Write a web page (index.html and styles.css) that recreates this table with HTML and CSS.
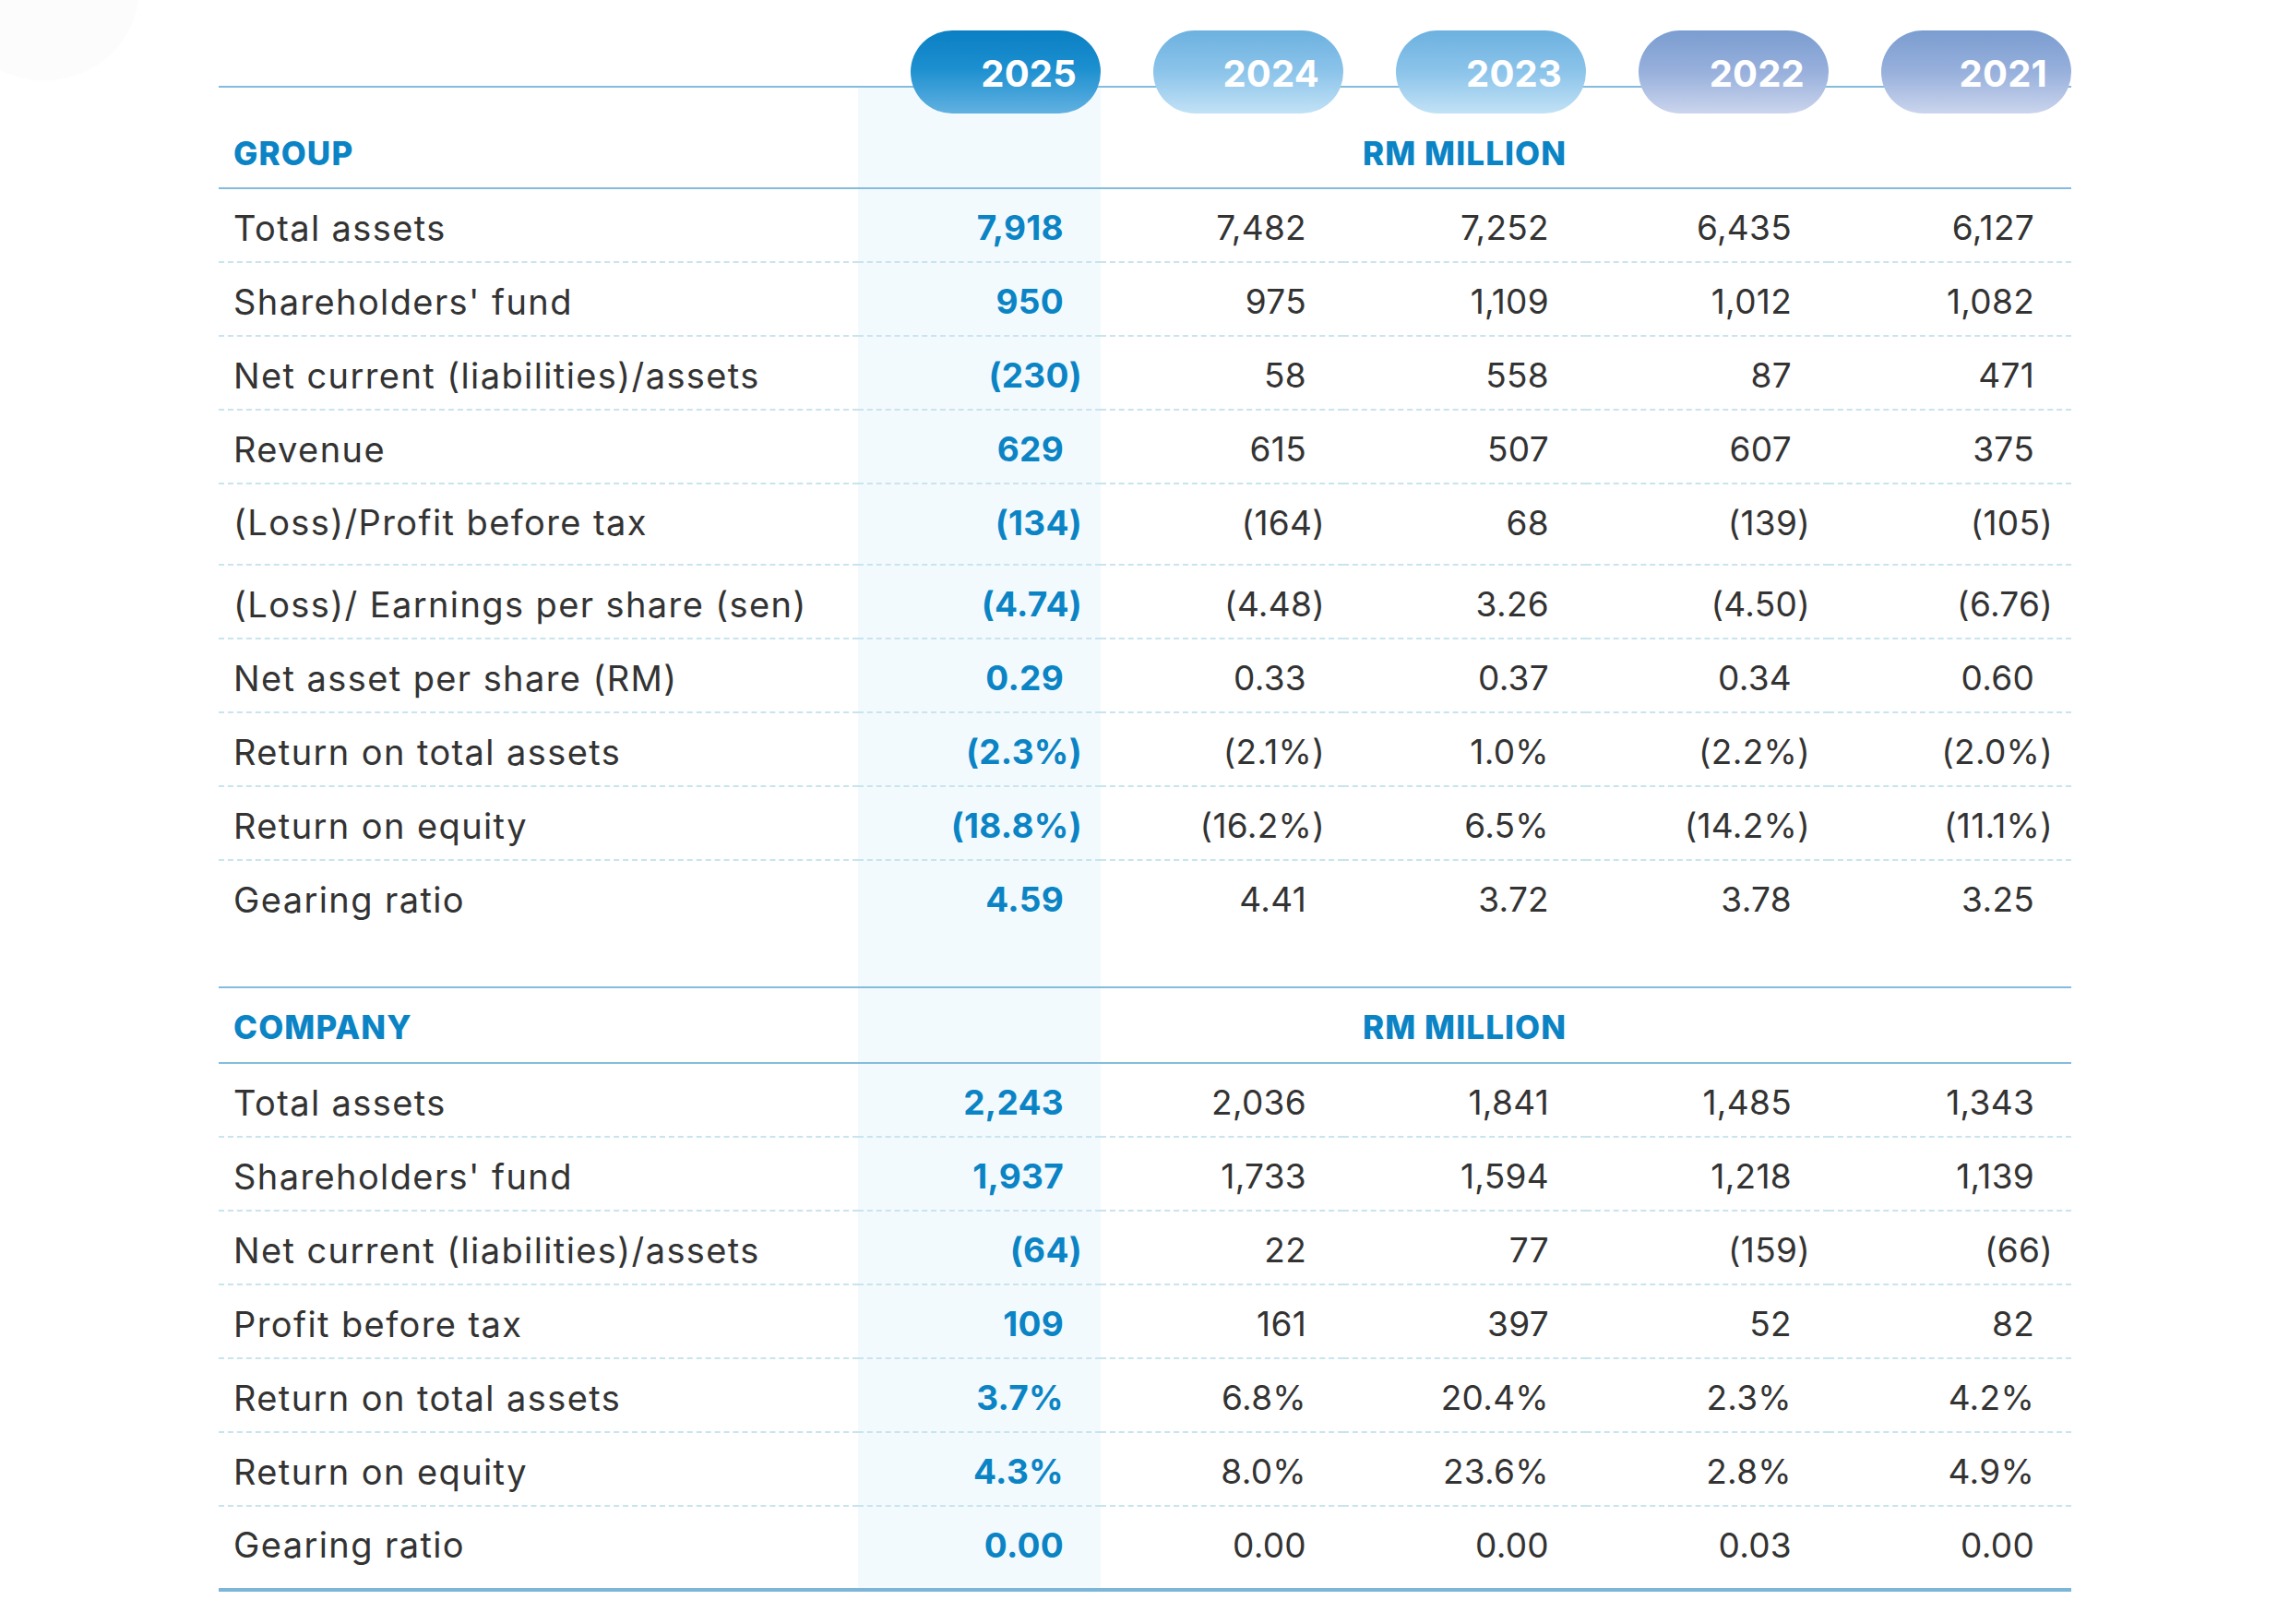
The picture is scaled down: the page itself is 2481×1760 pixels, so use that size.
FILE: index.html
```html
<!DOCTYPE html>
<html lang="en">
<head>
<meta charset="utf-8">
<title>Five-Year Financial Highlights</title>
<link rel="stylesheet" href="styles.css">
</head>
<body>
<div class="corner"></div>
<main class="sheet">
  <div class="years">
    <div class="years-gap"></div>
    <div class="pill pill-cur">2025</div>
    <div class="pill pill-sky">2024</div>
    <div class="pill pill-sky">2023</div>
    <div class="pill pill-slate">2022</div>
    <div class="pill pill-slate">2021</div>
  </div>
  <table class="fin">
    <colgroup>
      <col class="c-label">
      <col class="c-val" span="5">
    </colgroup>
    <tbody>
      <tr class="sec sec-first">
        <th class="sec-name">GROUP</th>
        <th class="unit" colspan="5">RM MILLION</th>
      </tr>
      <tr><td class="lbl">Total assets</td><td class="v cur">7,918</td><td class="v">7,482</td><td class="v">7,252</td><td class="v">6,435</td><td class="v">6,127</td></tr>
      <tr><td class="lbl">Shareholders' fund</td><td class="v cur">950</td><td class="v">975</td><td class="v">1,109</td><td class="v">1,012</td><td class="v">1,082</td></tr>
      <tr><td class="lbl">Net current (liabilities)/assets</td><td class="v cur neg">(230)</td><td class="v">58</td><td class="v">558</td><td class="v">87</td><td class="v">471</td></tr>
      <tr><td class="lbl">Revenue</td><td class="v cur">629</td><td class="v">615</td><td class="v">507</td><td class="v">607</td><td class="v">375</td></tr>
      <tr class="tall"><td class="lbl">(Loss)/Profit before tax</td><td class="v cur neg">(134)</td><td class="v neg">(164)</td><td class="v">68</td><td class="v neg">(139)</td><td class="v neg">(105)</td></tr>
      <tr><td class="lbl">(Loss)/ Earnings per share (sen)</td><td class="v cur neg">(4.74)</td><td class="v neg">(4.48)</td><td class="v">3.26</td><td class="v neg">(4.50)</td><td class="v neg">(6.76)</td></tr>
      <tr><td class="lbl">Net asset per share (RM)</td><td class="v cur">0.29</td><td class="v">0.33</td><td class="v">0.37</td><td class="v">0.34</td><td class="v">0.60</td></tr>
      <tr><td class="lbl">Return on total assets</td><td class="v cur neg">(2.3%)</td><td class="v neg">(2.1%)</td><td class="v">1.0%</td><td class="v neg">(2.2%)</td><td class="v neg">(2.0%)</td></tr>
      <tr><td class="lbl">Return on equity</td><td class="v cur neg">(18.8%)</td><td class="v neg">(16.2%)</td><td class="v">6.5%</td><td class="v neg">(14.2%)</td><td class="v neg">(11.1%)</td></tr>
      <tr class="open"><td class="lbl">Gearing ratio</td><td class="v cur">4.59</td><td class="v">4.41</td><td class="v">3.72</td><td class="v">3.78</td><td class="v">3.25</td></tr>
      <tr class="gap"><td></td><td></td><td></td><td></td><td></td><td></td></tr>
      <tr class="sec sec-next">
        <th class="sec-name">COMPANY</th>
        <th class="unit" colspan="5">RM MILLION</th>
      </tr>
      <tr><td class="lbl">Total assets</td><td class="v cur">2,243</td><td class="v">2,036</td><td class="v">1,841</td><td class="v">1,485</td><td class="v">1,343</td></tr>
      <tr><td class="lbl">Shareholders' fund</td><td class="v cur">1,937</td><td class="v">1,733</td><td class="v">1,594</td><td class="v">1,218</td><td class="v">1,139</td></tr>
      <tr><td class="lbl">Net current (liabilities)/assets</td><td class="v cur neg">(64)</td><td class="v">22</td><td class="v">77</td><td class="v neg">(159)</td><td class="v neg">(66)</td></tr>
      <tr><td class="lbl">Profit before tax</td><td class="v cur">109</td><td class="v">161</td><td class="v">397</td><td class="v">52</td><td class="v">82</td></tr>
      <tr><td class="lbl">Return on total assets</td><td class="v cur">3.7%</td><td class="v">6.8%</td><td class="v">20.4%</td><td class="v">2.3%</td><td class="v">4.2%</td></tr>
      <tr><td class="lbl">Return on equity</td><td class="v cur">4.3%</td><td class="v">8.0%</td><td class="v">23.6%</td><td class="v">2.8%</td><td class="v">4.9%</td></tr>
      <tr class="last"><td class="lbl">Gearing ratio</td><td class="v cur">0.00</td><td class="v">0.00</td><td class="v">0.00</td><td class="v">0.03</td><td class="v">0.00</td></tr>
    </tbody>
  </table>
</main>
</body>
</html>
```

FILE: styles.css
```css
html, body {
  margin: 0;
  padding: 0;
  background: #ffffff;
}

body {
  font-family: Inter, "Noto Sans", "Liberation Sans", sans-serif;
  color: #333333;
  position: relative;
  min-height: 1760px;
  overflow: hidden;
}

.corner {
  position: absolute;
  left: -55px;
  top: -105px;
  width: 205px;
  height: 192px;
  border-radius: 50%;
  background: #fcfcfc;
}

.sheet {
  position: relative;
  width: 2008px;
  padding: 33px 0 0 237px;
}

.years {
  display: grid;
  grid-template-columns: 693px repeat(5, 263px);
  height: 90px;
  margin-bottom: -30px;
  position: relative;
  z-index: 1;
}

.pill {
  justify-self: end;
  width: 206px;
  height: 90px;
  box-sizing: border-box;
  border-radius: 45px;
  padding: 3px 26px 0 0;
  text-align: right;
  line-height: 87px;
  font-size: 40px;
  font-weight: 700;
  color: #ffffff;
  letter-spacing: 0.2px;
}

.pill-cur {
  background: linear-gradient(180deg, #0a7fc3 0%, #1b8fcf 45%, #62b1e1 100%);
}

.pill-sky {
  background: linear-gradient(180deg, #6cb1e0 0%, #8cc4ea 50%, #c2e2f6 100%);
}

.pill-slate {
  background: linear-gradient(180deg, #7a9dd0 0%, #98b0dc 50%, #cbd5ed 100%);
}

.fin {
  width: 2008px;
  table-layout: fixed;
  border-collapse: collapse;
  border-top: 2px solid #84bcdd;
  background: linear-gradient(90deg, transparent 693px, #f3fafd 693px, #f3fafd 956px, transparent 956px);
}

.c-label { width: 693px; }
.c-val { width: 263px; }

.sec th {
  padding: 4px 0 0;
  height: 76px;
  vertical-align: middle;
  border-bottom: 2px solid #84bcdd;
  color: #0b84c5;
  font-weight: 800;
  font-size: 35px;
  letter-spacing: 1.1px;
}

.sec-first th {
  height: 110px;
  padding-top: 34px;
  box-sizing: border-box;
}

.sec-next th {
  border-top: 2px solid #84bcdd;
}

.sec-name {
  text-align: left;
  padding-left: 16px !important;
}

.unit {
  text-align: center;
}

td {
  padding: 5px 0 0;
  height: 73px;
  vertical-align: middle;
  border-bottom: 2px dashed #c8e4ee;
  font-size: 38px;
  white-space: nowrap;
}

.lbl {
  padding-left: 16px;
  font-weight: 400;
  color: #333333;
  letter-spacing: 1.4px;
}

.v {
  text-align: right;
  padding-right: 40px;
  color: #333333;
  font-size: 37px;
  letter-spacing: 0.3px;
}

.v.neg {
  padding-right: 20px;
}

.v.cur {
  color: #0b84c5;
  font-weight: 700;
}

.tall td {
  height: 82px;
  padding-top: 0;
  padding-bottom: 4px;
}

.open td {
  border-bottom: none;
}

.gap td {
  height: 53px;
  border-bottom: none;
}

.last td {
  height: 82px;
  padding-top: 0;
  padding-bottom: 6px;
  border-bottom: 4px solid #7db5d8;
}
```
